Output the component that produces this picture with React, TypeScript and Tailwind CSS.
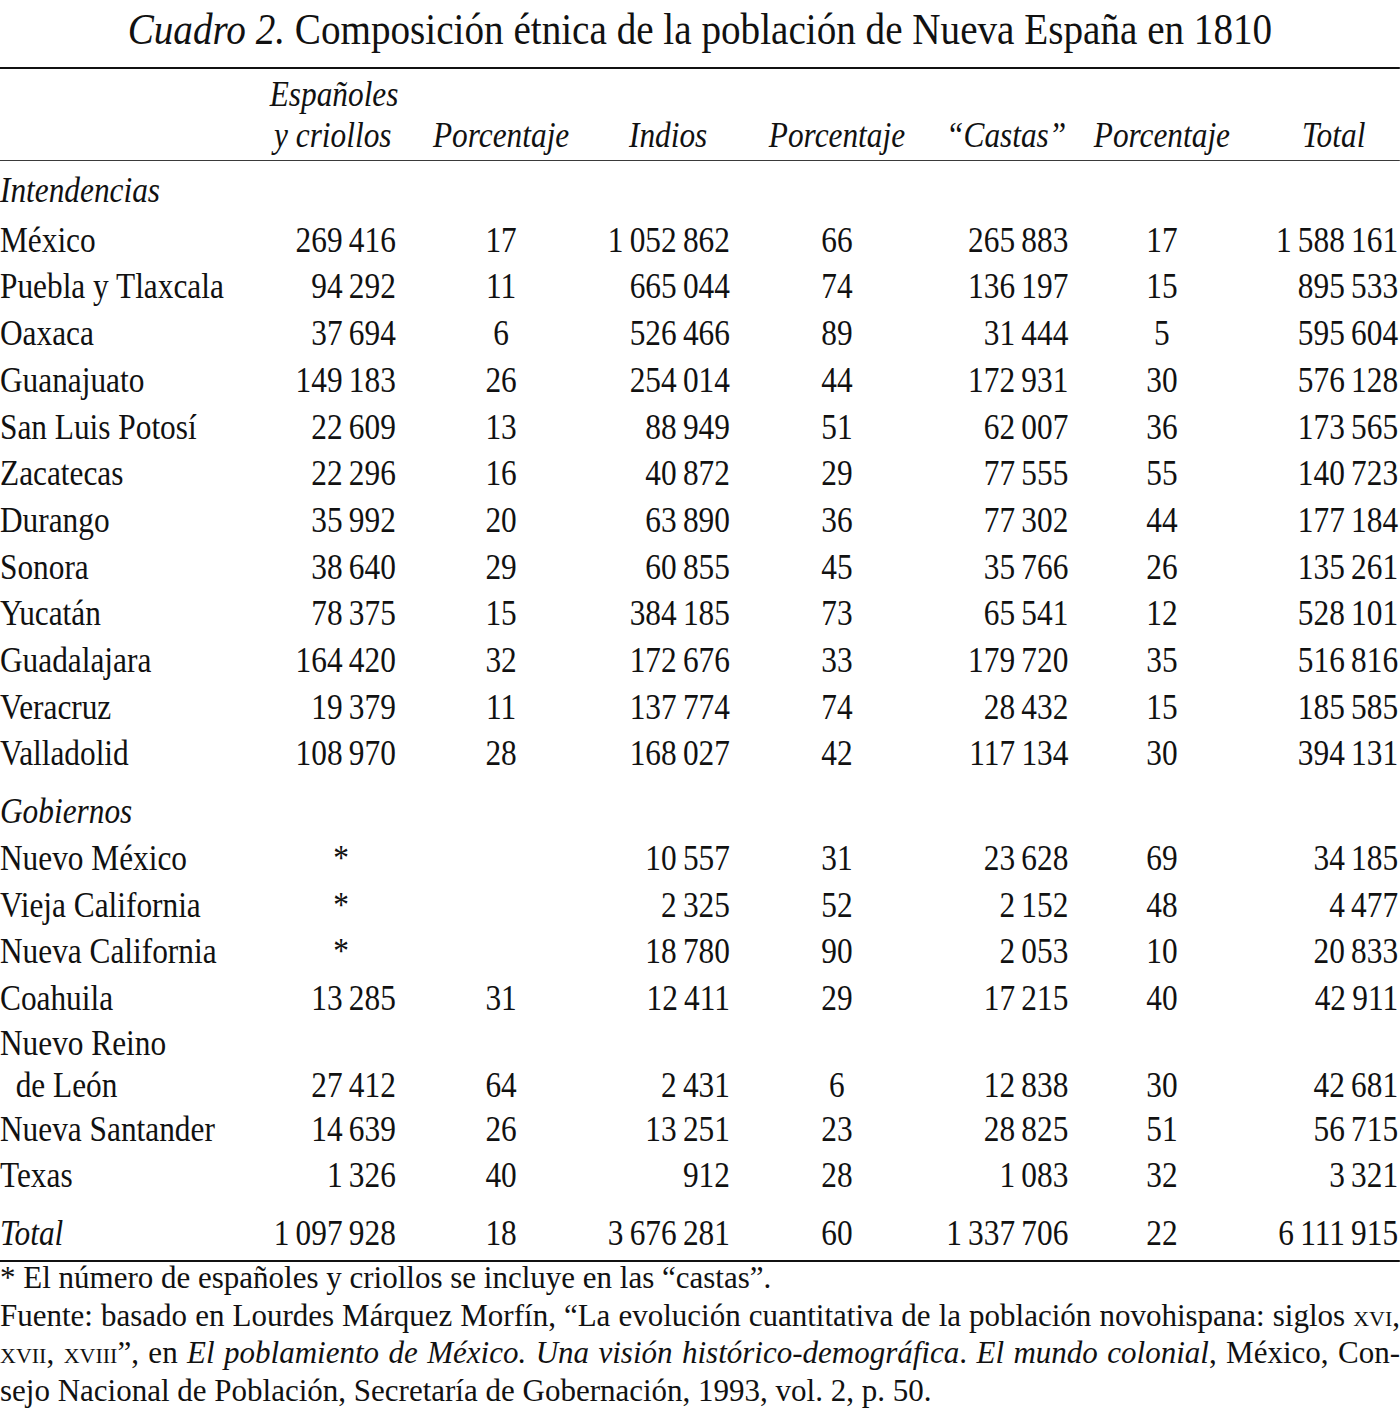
import React from 'react'

type Row = { name: string; sub?: string; values: string[] }

const intendencias: Row[] = [
  { name: 'México', values: ['269 416', '17', '1 052 862', '66', '265 883', '17', '1 588 161'] },
  { name: 'Puebla y Tlaxcala', values: ['94 292', '11', '665 044', '74', '136 197', '15', '895 533'] },
  { name: 'Oaxaca', values: ['37 694', '6', '526 466', '89', '31 444', '5', '595 604'] },
  { name: 'Guanajuato', values: ['149 183', '26', '254 014', '44', '172 931', '30', '576 128'] },
  { name: 'San Luis Potosí', values: ['22 609', '13', '88 949', '51', '62 007', '36', '173 565'] },
  { name: 'Zacatecas', values: ['22 296', '16', '40 872', '29', '77 555', '55', '140 723'] },
  { name: 'Durango', values: ['35 992', '20', '63 890', '36', '77 302', '44', '177 184'] },
  { name: 'Sonora', values: ['38 640', '29', '60 855', '45', '35 766', '26', '135 261'] },
  { name: 'Yucatán', values: ['78 375', '15', '384 185', '73', '65 541', '12', '528 101'] },
  { name: 'Guadalajara', values: ['164 420', '32', '172 676', '33', '179 720', '35', '516 816'] },
  { name: 'Veracruz', values: ['19 379', '11', '137 774', '74', '28 432', '15', '185 585'] },
  { name: 'Valladolid', values: ['108 970', '28', '168 027', '42', '117 134', '30', '394 131'] },
]

const gobiernos: Row[] = [
  { name: 'Nuevo México', values: ['*', '', '10 557', '31', '23 628', '69', '34 185'] },
  { name: 'Vieja California', values: ['*', '', '2 325', '52', '2 152', '48', '4 477'] },
  { name: 'Nueva California', values: ['*', '', '18 780', '90', '2 053', '10', '20 833'] },
  { name: 'Coahuila', values: ['13 285', '31', '12 411', '29', '17 215', '40', '42 911'] },
  { name: 'Nuevo Reino', sub: 'de León', values: ['27 412', '64', '2 431', '6', '12 838', '30', '42 681'] },
  { name: 'Nueva Santander', values: ['14 639', '26', '13 251', '23', '28 825', '51', '56 715'] },
  { name: 'Texas', values: ['1 326', '40', '912', '28', '1 083', '32', '3 321'] },
]

const totals = ['1 097 928', '18', '3 676 281', '60', '1 337 706', '22', '6 111 915']

// thin spaces between the groups of digits
const thin = (v: string) => v.replace(/ /g, '\u2009')

function Cells({ values }: { values: string[] }) {
  return (
    <>
      {values.map((v, i) => {
        if (v === '*') {
          return (
            <div key={i} className="pl-[19px] text-center">
              *
            </div>
          )
        }
        return (
          <div key={i} className={i % 2 === 0 ? 'text-right' : 'text-center'}>
            {thin(v)}
          </div>
        )
      })}
    </>
  )
}

function DataRow({ row }: { row: Row }) {
  if (row.sub) {
    return (
      <div className="grid grid-cols-[310px_145px_242px_142px_246px_143px_215px_164px] items-end leading-[42px]">
        <div>
          <div>{row.name}</div>
          <div className="pl-[18px]">{row.sub}</div>
        </div>
        <Cells values={row.values} />
      </div>
    )
  }
  return (
    <div className="grid grid-cols-[310px_145px_242px_142px_246px_143px_215px_164px] items-end leading-[46.7px]">
      <div className="whitespace-nowrap">{row.name}</div>
      <Cells values={row.values} />
    </div>
  )
}

export default function App() {
  return (
    <div className="w-[1400px] h-[1428px] overflow-hidden bg-white text-[#111] [font-family:'Liberation_Serif','Times_New_Roman',serif]">
      <div className="w-[1609px] origin-left scale-x-[0.87] text-[36px]">
        <div className="h-[67px] text-center text-[45px] leading-[59px] whitespace-nowrap">
          <span className="italic">Cuadro 2.</span> Composición étnica de la población de Nueva España en 1810
        </div>

        <div className="grid grid-cols-[310px_145px_242px_142px_246px_143px_215px_164px] items-end border-t-2 border-b border-t-[#111] border-b-[#3a3a3a] pt-[5px] pb-[4px] italic leading-[41px]">
          <div />
          <div className="text-center whitespace-nowrap">
            <div>Españoles</div>
            <div>y criollos</div>
          </div>
          <div className="text-center">Porcentaje</div>
          <div className="text-center">Indios</div>
          <div className="text-center">Porcentaje</div>
          <div className="text-center whitespace-nowrap">“Castas”</div>
          <div className="text-center">Porcentaje</div>
          <div className="pl-[16px] text-center">Total</div>
        </div>

        <div className="pt-[6px] pb-[3px] italic leading-[46.7px]">Intendencias</div>
        {intendencias.map((r) => (
          <DataRow key={r.name} row={r} />
        ))}

        <div className="pt-[11px] italic leading-[46.7px]">Gobiernos</div>
        {gobiernos.map((r) => (
          <DataRow key={r.name} row={r} />
        ))}

        <div className="grid grid-cols-[310px_145px_242px_142px_246px_143px_215px_164px] items-end border-b-2 border-[#111] pt-[11px] pb-[3.5px] leading-[46.7px]">
          <div className="italic">Total</div>
          <Cells values={totals} />
        </div>
      </div>

      <div className="-mt-[3px] text-[31px] leading-[37.5px]">
        <div>* El número de españoles y criollos se incluye en las “castas”.</div>
        <div className="text-justify [text-align-last:justify]">
          Fuente: basado en Lourdes Márquez Morfín, “La evolución cuantitativa de la población novohispana: siglos{' '}
          <span className="[font-variant:small-caps]">xvi</span>,
        </div>
        <div className="text-justify [text-align-last:justify]">
          <span className="[font-variant:small-caps]">xvii</span>, <span className="[font-variant:small-caps]">xviii</span>”, en{' '}
          <i>El poblamiento de México. Una visión histórico-demográfica</i>. <i>El mundo colonial</i>, México, Con-
        </div>
        <div>sejo Nacional de Población, Secretaría de Gobernación, 1993, vol. 2, p. 50.</div>
      </div>
    </div>
  )
}
